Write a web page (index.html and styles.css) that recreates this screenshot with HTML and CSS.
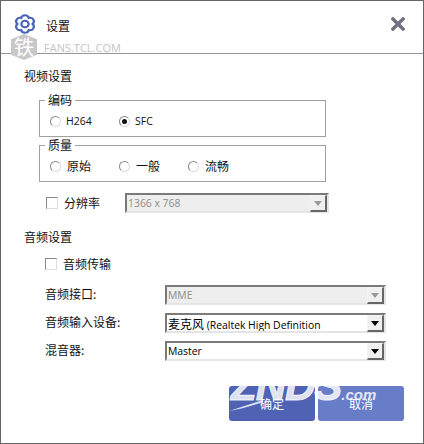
FILE: index.html
```html
<!doctype html>
<html lang="zh-CN">
 <head>
  <meta charset="utf-8">
  <title>设置</title>
  <link rel="stylesheet" href="styles.css">
 </head>
 <body>
  <div class="window">
   <div class="titlebar">
    <svg class="gear" viewBox="0 0 24 24" width="24" height="22" preserveAspectRatio="none">
     <path d="M8.2 5.42A3.9 3.9 0 0 1 15.8 5.42A3.9 3.9 0 0 1 19.6 12A3.9 3.9 0 0 1 15.8 18.58A3.9 3.9 0 0 1 8.2 18.58A3.9 3.9 0 0 1 4.4 12A3.9 3.9 0 0 1 8.2 5.42z" fill="none" stroke="#4a62b8" stroke-width="2.2"/>
     <circle cx="12" cy="12" r="3.6" fill="none" stroke="#4a62b8" stroke-width="2.2"/>
    </svg>
    <span class="title">设置</span>
    <svg class="close" viewBox="0 0 14 14" width="14" height="14">
     <path d="M2 2L12 12M12 2L2 12" stroke="#6f7080" stroke-width="3.4" stroke-linecap="square"/>
    </svg>
   </div>

   <div class="content">
    <h2 class="section">视频设置</h2>

    <fieldset class="group">
     <legend>编码</legend>
     <div class="radios">
      <label class="radio"><span class="dot"></span><span class="latin">H264</span></label>
      <label class="radio"><span class="dot on"></span><span class="latin">SFC</span></label>
     </div>
    </fieldset>

    <fieldset class="group">
     <legend>质量</legend>
     <div class="radios">
      <label class="radio"><span class="dot"></span>原始</label>
      <label class="radio"><span class="dot"></span>一般</label>
      <label class="radio"><span class="dot"></span>流畅</label>
     </div>
    </fieldset>

    <div class="res-row">
     <label class="check"><span class="box"></span>分辨率</label>
     <div class="select disabled res-select">
      <span class="value">1366 x 768</span>
      <span class="arrow"></span>
     </div>
    </div>

    <h2 class="section audio">音频设置</h2>

    <label class="check audio-check"><span class="box"></span>音频传输</label>

    <div class="form">
     <span class="field">音频接口:</span>
     <div class="select disabled">
      <span class="value">MME</span>
      <span class="arrow"></span>
     </div>
     <span class="field">音频输入设备:</span>
     <div class="select">
      <span class="value"><span class="cjk">麦克风</span> (Realtek High Definition</span>
      <span class="arrow"></span>
     </div>
     <span class="field">混音器:</span>
     <div class="select">
      <span class="value">Master</span>
      <span class="arrow"></span>
     </div>
    </div>

    <div class="actions">
     <button class="btn primary"><span class="btn-label">确定</span></button>
     <button class="btn"><span class="btn-label">取消</span></button>
    </div>
   </div>

   <!-- watermarks burnt into the screenshot -->
   <div class="mark-tcl">
    <span class="shield">铁</span>
    <span class="mark-text">FANS.TCL.COM</span>
   </div>
   <div class="mark-znds">ZNDS<small>.com</small></div>
  </div>
 </body>
</html>
```

FILE: styles.css
```css
* {
	box-sizing: border-box;
}

body {
	margin: 0;
	background: #ffffff;
}

.window {
	position: relative;
	width: 424px;
	height: 444px;
	overflow: hidden;
	border: 1px solid #666666;
	background: #ffffff;
	font-family: "Noto Sans CJK SC", "Liberation Sans", sans-serif;
	font-size: 12px;
	color: #111111;
}

.titlebar {
	display: flex;
	align-items: center;
	height: 53px;
	padding: 0 18px 3px 12px;
	border-bottom: 1px solid #96969e;
}

.gear {
	flex: none;
	margin-bottom: 4px;
}

.title {
	margin-left: 9px;
	line-height: 16px;
}

.close {
	margin-left: auto;
	margin-bottom: 4px;
}

.content {
	padding: 14px 0 0 23px;
}

.section {
	margin: 0;
	font-size: 12px;
	font-weight: normal;
	line-height: 16px;
}

.group {
	width: 287px;
	height: 44px;
	margin: 1px 0 0 15px;
	padding: 0 0 0 10px;
	border: 1px solid #a0a0a0;
}

.group:first-of-type {
	margin-top: 9px;
}

.group legend {
	padding: 0 3px;
	margin-left: -5px;
	line-height: 14px;
}

.radios {
	display: flex;
	margin-top: 6px;
}

.radio {
	display: flex;
	align-items: center;
	width: 69px;
	line-height: 16px;
}

.dot {
	position: relative;
	flex: none;
	width: 11px;
	height: 11px;
	margin-right: 6px;
	border: 1px solid #8a8a8a;
	border-right-color: #dddddd;
	border-bottom-color: #dddddd;
	border-radius: 50%;
}

.dot.on::after {
	content: "";
	position: absolute;
	top: 2px;
	left: 2px;
	width: 5px;
	height: 5px;
	border-radius: 50%;
	background: #111111;
}

.latin {
	font-family: "Open Sans", "Liberation Sans", sans-serif;
	font-size: 10.5px;
	margin-left: -1px;
}

.res-row {
	display: flex;
	align-items: center;
	margin: 11px 0 0 22px;
}

.check {
	display: flex;
	align-items: center;
	line-height: 16px;
}

.box {
	flex: none;
	width: 12px;
	height: 12px;
	margin-right: 6px;
	border: 1px solid #8a8a8a;
	border-right-color: #dddddd;
	border-bottom-color: #dddddd;
}

.res-select {
	width: 204px;
	margin-left: 25px;
}

.audio {
	margin-top: 16px;
}

.audio-check {
	margin: 11px 0 0 21px;
}

.form {
	display: grid;
	grid-template-columns: 120px 221px;
	grid-auto-rows: 20px;
	row-gap: 8px;
	align-items: center;
	margin: 13px 0 0 21px;
}

.field {
	line-height: 16px;
	margin-top: -2px;
}

.select {
	display: flex;
	height: 20px;
	border: 2px solid #7a7a7a;
	border-right-color: #e4e4e4;
	border-bottom-color: #e4e4e4;
	background: #ffffff;
	font-family: "Open Sans", "Noto Sans CJK SC", sans-serif;
	font-size: 10.4px;
	color: #000000;
}

.select.disabled {
	background: #eeeeee;
	color: #8c8c8c;
}

.value {
	flex: 1;
	padding-left: 1px;
	line-height: 17px;
	white-space: nowrap;
	overflow: hidden;
}

.cjk {
	font-family: "Noto Sans CJK SC", sans-serif;
	font-size: 12px;
}

.arrow {
	position: relative;
	flex: none;
	width: 17px;
	margin-bottom: -1px;
	background: #f0f0f0;
	border: 1px solid #f4f4f4;
	border-right: 2px solid #666666;
	border-bottom: 2px solid #666666;
}

.arrow::after {
	content: "";
	position: absolute;
	top: 5px;
	left: 3px;
	border: 4px solid transparent;
	border-top: 5px solid #000000;
	border-bottom: 0;
}

.disabled .arrow::after {
	border-top-color: #9a9a9a;
}

.actions {
	display: flex;
	gap: 3px;
	margin: 25px 0 0 205px;
}

.btn {
	width: 86px;
	height: 35px;
	padding: 0;
	border: 0;
	border-radius: 3px;
	background: #677dc8;
	font-family: inherit;
	font-size: 12px;
	color: #ffffff;
}

.btn.primary {
	background: #4f62b4;
}

/* label stays above the ZNDS watermark */
.btn-label {
	position: relative;
	z-index: 2;
}

.mark-tcl {
	position: absolute;
	top: 33px;
	left: 10px;
	display: flex;
	align-items: center;
	gap: 7px;
}

.shield {
	width: 26px;
	height: 26px;
	clip-path: polygon(50% 0, 100% 20%, 100% 80%, 50% 100%, 0 80%, 0 20%);
	background: #c8c8c8;
	font-size: 20px;
	line-height: 26px;
	text-align: center;
	color: #ffffff;
}

.mark-text {
	margin-top: 1px;
	font-family: "Open Sans", "Liberation Sans", sans-serif;
	font-size: 11px;
	color: #c4c4c4;
}

.mark-znds {
	position: absolute;
	z-index: 1;
	top: 360px;
	left: 230px;
	font-family: "Liberation Sans", sans-serif;
	font-size: 42px;
	font-style: italic;
	font-weight: bold;
	line-height: 50px;
	letter-spacing: -1px;
	-webkit-text-stroke: 1px rgba(255, 255, 255, 0.82);
	color: rgba(255, 255, 255, 0.82);
	pointer-events: none;
}

.mark-znds small {
	font-size: 15px;
	letter-spacing: 0;
	-webkit-text-stroke: 0;
}

/* tail under the Z */
.mark-znds::after {
	content: "";
	position: absolute;
	top: 39px;
	left: -2px;
	width: 34px;
	height: 11px;
	clip-path: polygon(0 100%, 100% 0, 100% 20%, 40% 75%, 0 100%);
	background: rgba(255, 255, 255, 0.82);
}
```
